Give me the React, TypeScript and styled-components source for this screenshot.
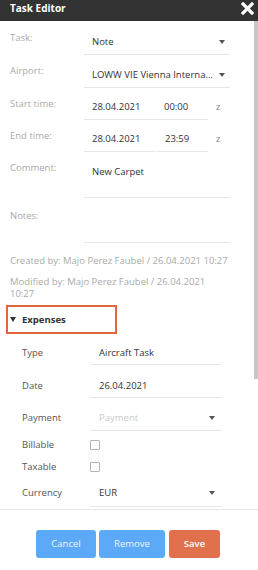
import React from "react";
import styled, { createGlobalStyle } from "styled-components";

const Global = createGlobalStyle`
  html, body { margin: 0; padding: 0; }
  body {
    width: 258px;
    height: 570px;
    overflow: hidden;
    background: #fff;
    font-family: "Open Sans", "Liberation Sans", sans-serif;
    font-size: 9.5px;
    color: #333;
  }
  * { box-sizing: border-box; }
`;

const Shell = styled.div`
  display: flex;
  flex-direction: column;
  width: 258px;
  height: 570px;
`;

const Header = styled.div`
  flex: 0 0 21px;
  background: #333;
  display: flex;
  justify-content: space-between;
  align-items: flex-start;
  padding: 2px 4px 0 10px;
`;

const Title = styled.div`
  color: #fff;
  font-size: 10px;
  font-weight: 700;
  line-height: 12px;
`;

const Close = styled.svg`
  width: 13px;
  height: 13px;
`;

const Body = styled.div`
  flex: 1 1 auto;
  min-height: 0;
  display: flex;
`;

const Content = styled.div`
  flex: 1 1 auto;
  min-width: 0;
  overflow: hidden;
`;

const Track = styled.div`
  flex: 0 0 4px;
`;

const Thumb = styled.div`
  height: 358px;
  background: #c6c6c6;
`;

const Form = styled.div`
  padding: 1px 0 0 10px;
`;

const Row = styled.div`
  display: grid;
  grid-template-columns: 74px 146px;
  align-items: start;
`;

const TimeRow = styled.div`
  display: grid;
  grid-template-columns: 74px 72px 52px auto;
  align-items: start;
`;

const Label = styled.div<{ $pt?: number }>`
  padding-top: ${(p) => p.$pt ?? 9}px;
  line-height: 14px;
  color: #aaa;
`;

const Field = styled.div<{ $pt: number; $pb: number; $gap?: boolean }>`
  display: flex;
  align-items: center;
  justify-content: space-between;
  padding: ${(p) => p.$pt}px 5px ${(p) => p.$pb}px 8px;
  line-height: 14px;
  border-bottom: 1px solid #e6e6e6;
  color: #333;
  min-width: 0;
  margin-left: ${(p) => (p.$gap ? "1px" : "0")};
`;

const Value = styled.span<{ $placeholder?: boolean }>`
  white-space: nowrap;
  overflow: hidden;
  text-overflow: ellipsis;
  min-width: 0;
  color: ${(p) => (p.$placeholder ? "#c8c8c8" : "#333")};
`;

const Caret = styled.span`
  flex: 0 0 auto;
  width: 0;
  height: 0;
  margin-left: 5px;
  border-left: 3.5px solid transparent;
  border-right: 3.5px solid transparent;
  border-top: 4px solid #555;
`;

const Zone = styled.div`
  padding: 12px 0 0 8px;
  line-height: 14px;
  color: #888;
`;

const Meta = styled.div`
  padding: 12px 0 0 10px;
  width: 228px;
  line-height: 12px;
  color: #aaa;
  p { margin: 0 0 9px; }
  p:last-child { margin-bottom: 0; }
`;

const SectionHead = styled.div`
  margin: 5px 0 0 6px;
  width: 111px;
  height: 29px;
  border: 2px solid #e0663d;
  display: flex;
  align-items: center;
  padding-left: 2px;
  gap: 6px;
  font-weight: 700;
  color: #333;
`;

const Tri = styled.span`
  width: 0;
  height: 0;
  border-left: 3px solid transparent;
  border-right: 3px solid transparent;
  border-top: 5px solid #333;
`;

const Expenses = styled.div`
  padding: 0 0 0 22px;
`;

const ExRow = styled.div`
  display: grid;
  grid-template-columns: 68px 132px;
  align-items: start;
`;

const ExLabel = styled.div<{ $pt: number }>`
  padding-top: ${(p) => p.$pt}px;
  line-height: 14px;
  color: #555;
`;

const ExField = styled.div<{ $pt: number; $pb: number }>`
  display: flex;
  align-items: center;
  justify-content: space-between;
  padding: ${(p) => p.$pt}px 7px ${(p) => p.$pb}px 9px;
  line-height: 14px;
  border-bottom: 1px solid #e6e6e6;
  min-width: 0;
`;

const CheckRow = styled.div`
  display: grid;
  grid-template-columns: 68px 132px;
  align-items: center;
  padding: 7px 0 1px;
  line-height: 14px;
  color: #555;
`;

const Box = styled.span`
  width: 10px;
  height: 10px;
  border: 1px solid #b5b5b5;
  border-radius: 1px;
  background: #fff;
`;

const Footer = styled.div`
  flex: 0 0 61px;
  border-top: 1px solid #e8e8e8;
  display: flex;
  justify-content: center;
  align-items: flex-start;
  padding: 20px 2px 0 0;
  gap: 3px;
`;

const Btn = styled.button<{ $w: number; $kind: "blue" | "orange" }>`
  width: ${(p) => p.$w}px;
  height: 28px;
  border: none;
  border-radius: 3px;
  display: flex;
  align-items: center;
  justify-content: center;
  font-family: "Open Sans", "Liberation Sans", sans-serif;
  font-size: 9.5px;
  line-height: 14px;
  font-weight: ${(p) => (p.$kind === "orange" ? 600 : 400)};
  color: ${(p) => (p.$kind === "orange" ? "#fff" : "#eef6ff")};
  background: ${(p) => (p.$kind === "orange" ? "#e1704c" : "#5ba9f7")};
  padding: 0;
`;

const SaveBtn = styled(Btn)`
  margin-left: 1px;
`;

export default function App() {
  return (
    <>
      <Global />
      <Shell>
        <Header>
          <Title>Task Editor</Title>
          <Close viewBox="0 0 13 13">
            <path d="M2 2 L11 11 M11 2 L2 11" stroke="#fff" strokeWidth="3.2" strokeLinecap="square" />
          </Close>
        </Header>
        <Body>
          <Content>
            <Form>
              <Row>
                <Label>Task:</Label>
                <Field $pt={13} $pb={5}>
                  <Value>Note</Value>
                  <Caret />
                </Field>
              </Row>
              <Row>
                <Label>Airport:</Label>
                <Field $pt={13} $pb={5}>
                  <Value>LOWW VIE Vienna International</Value>
                  <Caret />
                </Field>
              </Row>
              <TimeRow>
                <Label>Start time:</Label>
                <Field $pt={12} $pb={5}>
                  <Value>28.04.2021</Value>
                </Field>
                <Field $pt={12} $pb={5}>
                  <Value>00:00</Value>
                </Field>
                <Zone>z</Zone>
              </TimeRow>
              <TimeRow>
                <Label>End time:</Label>
                <Field $pt={12} $pb={5}>
                  <Value>28.04.2021</Value>
                </Field>
                <Field $pt={12} $pb={5} $gap>
                  <Value>23:59</Value>
                </Field>
                <Zone>z</Zone>
              </TimeRow>
              <Row>
                <Label>Comment:</Label>
                <Field $pt={13} $pb={18}>
                  <Value>New Carpet</Value>
                </Field>
              </Row>
              <Row>
                <Label $pt={11}>Notes:</Label>
                <Field $pt={13} $pb={17}>
                  <Value>&nbsp;</Value>
                </Field>
              </Row>
            </Form>
            <Meta>
              <p>Created by: Majo Perez Faubel / 26.04.2021 10:27</p>
              <p>Modified by: Majo Perez Faubel / 26.04.2021 10:27</p>
            </Meta>
            <SectionHead>
              <Tri />
              <span>Expenses</span>
            </SectionHead>
            <Expenses>
              <ExRow>
                <ExLabel $pt={12}>Type</ExLabel>
                <ExField $pt={12} $pb={4}>
                  <Value>Aircraft Task</Value>
                </ExField>
              </ExRow>
              <ExRow>
                <ExLabel $pt={14}>Date</ExLabel>
                <ExField $pt={14} $pb={4}>
                  <Value>26.04.2021</Value>
                </ExField>
              </ExRow>
              <ExRow>
                <ExLabel $pt={13}>Payment</ExLabel>
                <ExField $pt={13} $pb={5}>
                  <Value $placeholder>Payment</Value>
                  <Caret />
                </ExField>
              </ExRow>
              <CheckRow>
                <span>Billable</span>
                <Box />
              </CheckRow>
              <CheckRow>
                <span>Taxable</span>
                <Box />
              </CheckRow>
              <ExRow>
                <ExLabel $pt={11}>Currency</ExLabel>
                <ExField $pt={11} $pb={6}>
                  <Value>EUR</Value>
                  <Caret />
                </ExField>
              </ExRow>
            </Expenses>
          </Content>
          <Track>
            <Thumb />
          </Track>
        </Body>
        <Footer>
          <Btn $w={60} $kind="blue">Cancel</Btn>
          <Btn $w={66} $kind="blue">Remove</Btn>
          <SaveBtn $w={51} $kind="orange">Save</SaveBtn>
        </Footer>
      </Shell>
    </>
  );
}
